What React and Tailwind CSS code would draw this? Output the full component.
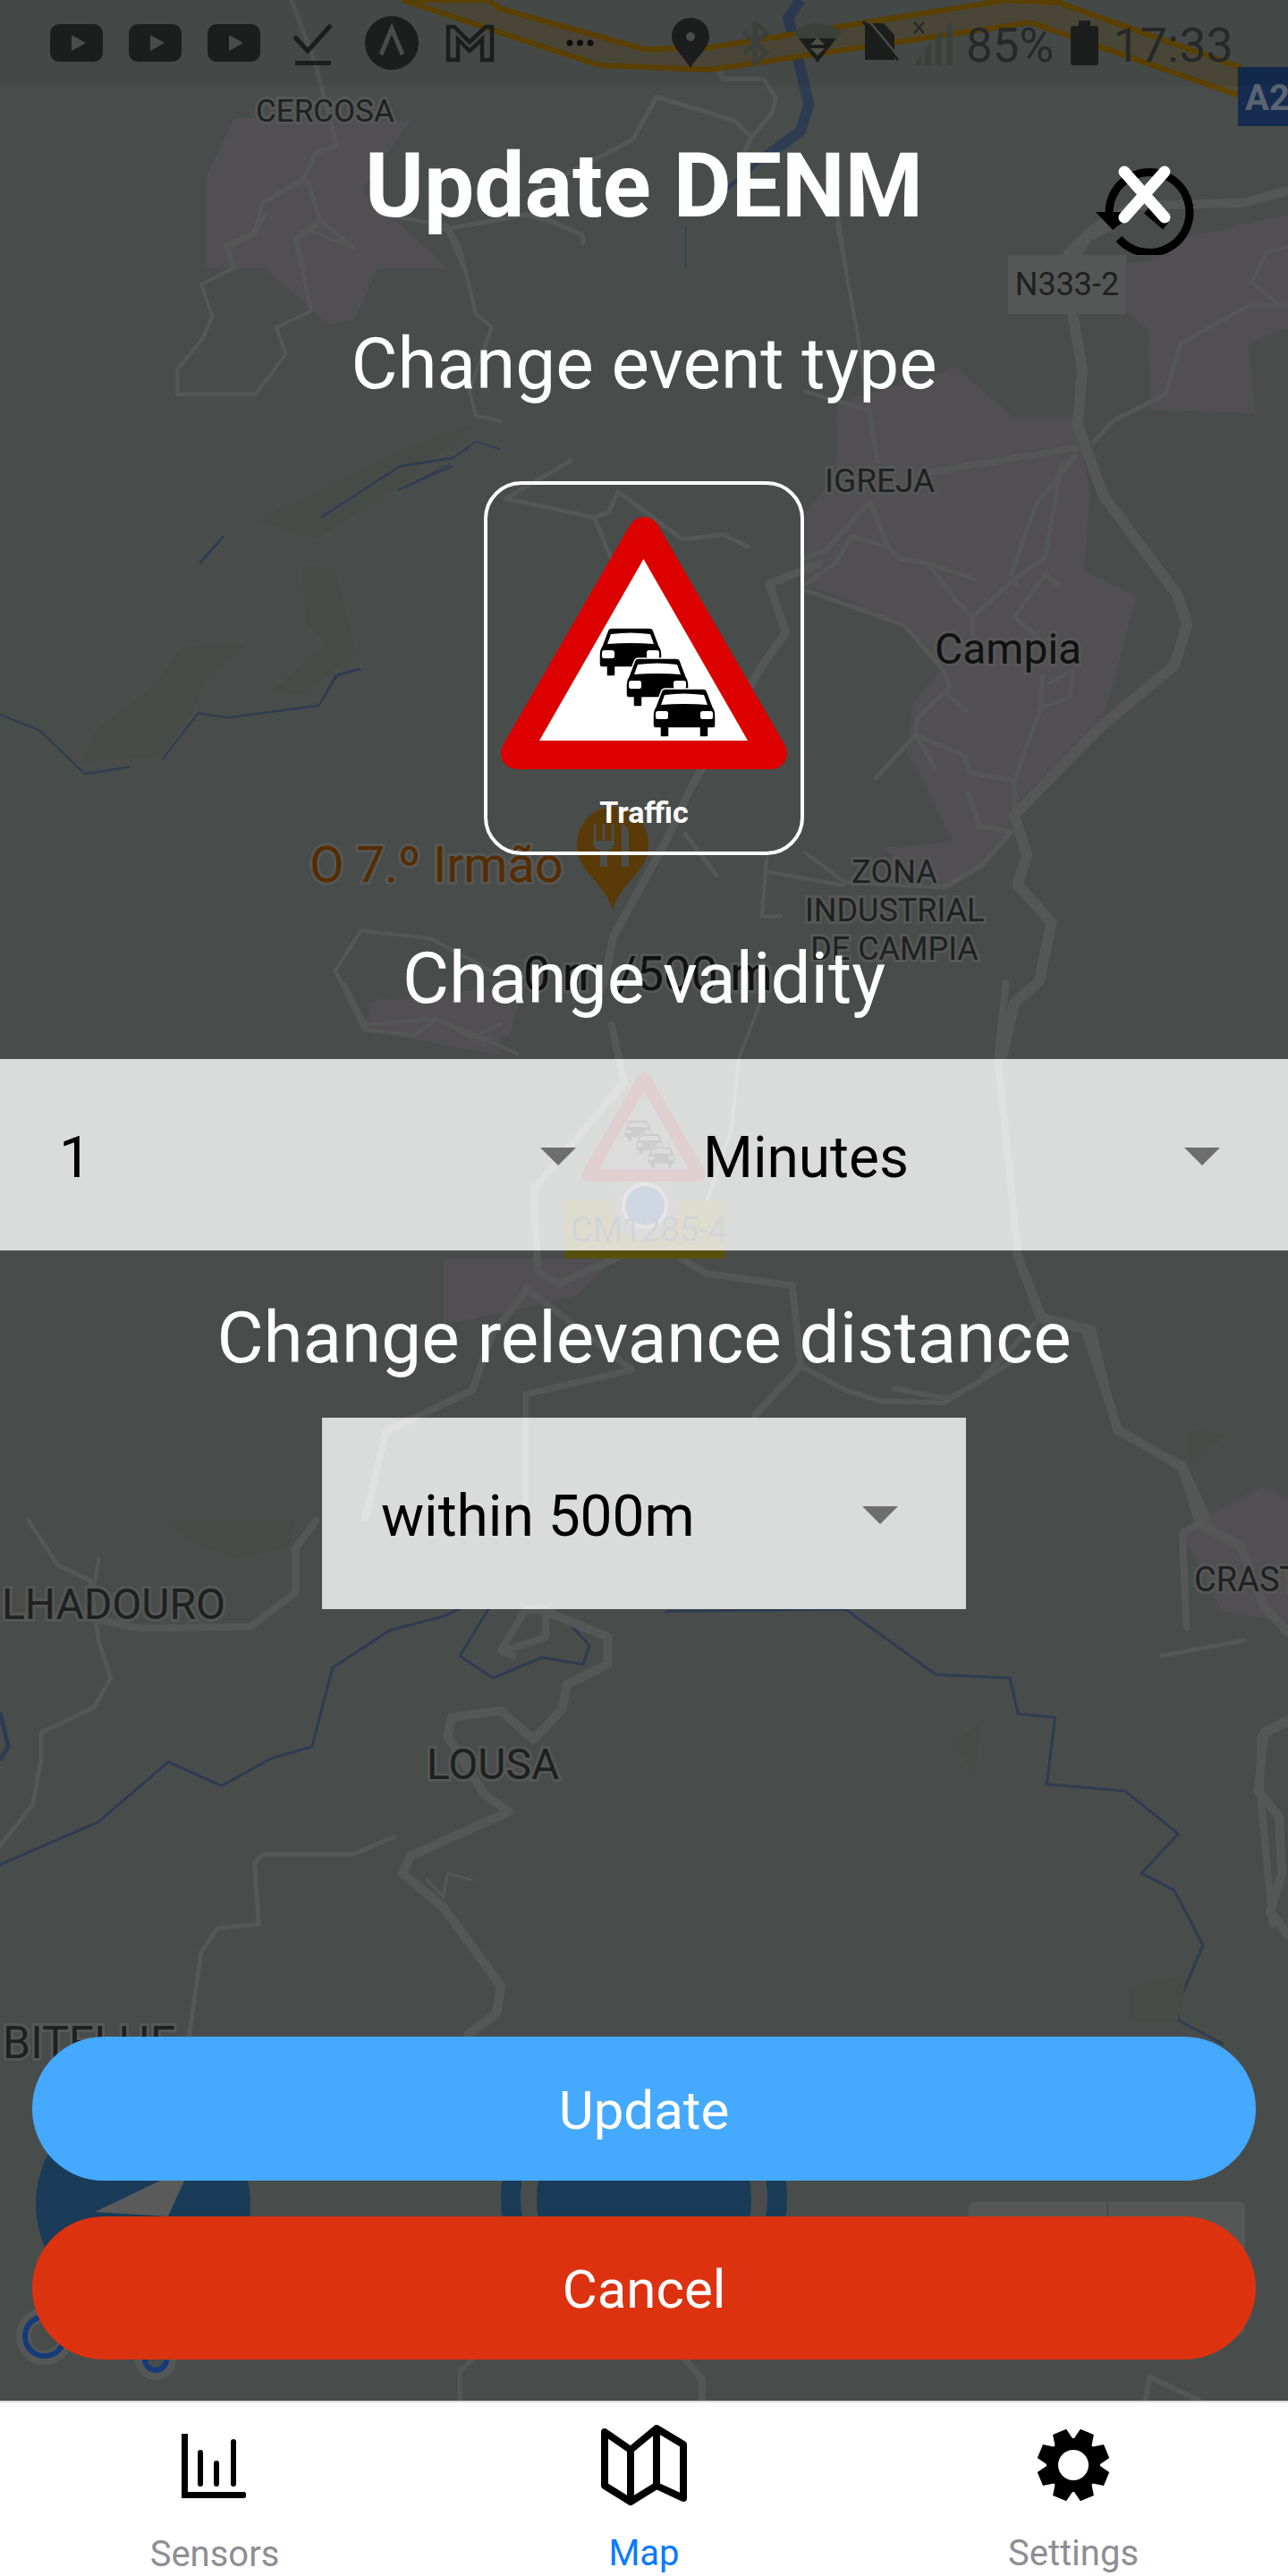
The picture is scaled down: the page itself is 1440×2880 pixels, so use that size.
import { useId } from "react";

// map shapes traced off the reference crops, each group keeps the crop's own scale
const MAP_GROUPS = [
  {
    transform: "translate(0 0) scale(.918 .3333)",
    areas: ["285,395 500,405 440,640 530,860 540,900 250,900 250,600", "1385,900 1450,790 1568,730 1568,900"],
    roads: [
      [5, "355,0 385,220 410,490 385,510 370,600 320,680 310,780 275,825 285,900"],
      [5, "375,610 390,740 430,830"],
      [5, "390,740 360,800 370,900"],
      [5, "875,230 880,265 930,265 945,330 940,380 915,460 905,520"],
      [5, "800,325 895,405 915,460"],
      [5, "800,325 770,470 650,640 670,740 710,790 710,815"],
      [5, "540,770 640,720 670,740"],
      [5, "545,770 565,900"],
      [5, "1020,720 1030,900"],
      [10, "1300,850 1330,770 1380,690 1515,680 1568,640"],
    ],
    rivers: [
      [12, "975,0 960,60 985,350 975,440 930,530"],
      [5, "930,530 865,680"],
      [1, "835,760 835,900"],
    ],
  },
  {
    transform: "translate(900 240) scale(.3444 .5995)",
    areas: [
      "105,350 300,320 490,285 680,380 880,380 925,520 905,665 1075,710 975,930 700,1090 650,1160 560,1220 440,1260 250,1180 480,1170 330,1000 350,910 440,850 330,770 100,710 0,690 0,560 100,480",
      "1040,90 1290,80 1400,20 1568,0 1568,210 1440,240 1460,370 1120,365 1115,215 1040,180",
    ],
    roads: [
      [12, "990,20 920,40 870,80 870,190 900,290 885,390 915,440 970,525 1210,710 1240,765 1200,840 950,960 680,1120 720,1195 690,1250 800,1320 760,1430 680,1470 640,1568"],
      [7, "410,480 880,435"],
      [5, "935,425 1000,385 1170,335 1220,240 1440,170 1568,170"],
      [4, "1450,125 1500,70 1568,60"],
      [4, "1450,125 1540,170"],
      [6, "0,640 70,625 210,535 270,620"],
      [5, "0,690 100,650 150,600 270,620 300,640 400,650 550,680"],
      [5, "400,650 490,720 545,750 700,670 780,640 830,470 880,450 750,540 670,670 690,690"],
      [5, "545,750 545,790"],
      [5, "780,670 680,750 760,790"],
      [5, "780,670 820,690"],
      [5, "0,700 320,765 450,850 470,880 365,940 360,970 230,1050"],
      [5, "460,895 525,925"],
      [5, "360,970 520,1010 530,1040 680,1055 680,1110"],
      [5, "360,970 420,1030"],
      [5, "770,860 765,920 680,1055"],
      [4, "765,920 860,900 870,850 790,875"],
      [6, "530,1080 565,1140 670,1150 570,1215 450,1255"],
      [4, "0,1190 130,1245 440,1255"],
      [4, "105,20 170,220 230,450"],
      [4, "0,330 210,365 235,460"],
    ],
  },
  {
    transform: "translate(0 240) scale(.357 .5995)",
    areas: ["650,0 1180,0 1195,85 1110,195 1030,205 770,70", "1180,1460 1568,1490 1568,1568 1130,1520"],
    greens: [
      "260,1020 300,960 480,880 570,805 770,800 640,870 600,930 500,1010",
      "945,655 1050,660 1115,815 950,895 850,890 1020,800 960,760",
      "810,570 1250,440 1490,390 1240,510 990,605",
    ],
    roads: [
      [4, "830,0 800,35 715,60 730,100 630,130 665,190 635,230 555,290 555,335 800,335 895,260 865,210 975,180 925,50 1000,15"],
      [4, "975,30 1100,60"],
      [4, "1190,0 1400,20 1440,60 1490,185 1540,210 1470,330 1490,375 1568,385"],
      [4, "1050,1410 1130,1335 1350,1350 1568,1420"],
      [4, "1050,1410 1140,1520 1300,1530 1370,1500 1480,1535 1568,1510"],
    ],
    rivers: [
      [2, "0,932 125,962 265,1043 405,1030"],
      [2, "510,1015 620,930 715,938 1000,915 1050,860 1130,848"],
      [3, "625,650 700,600"],
      [1.5, "1010,563 1250,470 1415,455 1490,423 1568,438"],
      [1.5, "1245,515 1410,465"],
    ],
  },
  {
    transform: "translate(300 500) scale(.5357 .3827)",
    roads: [
      [5, "630,40 495,150 680,205 710,190 730,130 865,270 950,255 1000,290"],
      [5, "680,205 720,340"],
      [9, "1150,340 1045,400 1080,540 1030,640 970,780 880,1000 830,1150 720,1430 700,1568"],
      [5, "870,1130 935,1250"],
      [4, "1040,1200 1030,1370 1070,1370"],
      [4, "1040,1240 1200,1280"],
    ],
    rivers: [
      [2, "110,205 275,55 385,30 420,0"],
      [2, "270,125 385,55"],
      [2, "0,775 105,755 145,665 190,645"],
    ],
  },
  {
    transform: "translate(0 1100) scale(.918 .459)",
    areas: ["450,45 640,0 620,130 530,85 450,100", "540,670 750,670 700,760 640,790 540,830"],
    roads: [
      [4, "420,0 445,100 530,85 580,125 630,170"],
      [4, "580,125 590,150"],
      [8, "745,100 760,240 650,500 655,700 680,730 760,660"],
      [8, "830,670 860,705 965,735 975,930 920,1050"],
      [8, "640,750 600,850 575,990 470,1090 445,1300"],
      [7, "640,740 770,940 640,1000 640,1300"],
      [8, "1225,0 1215,180 1240,660 1270,810 1330,840 1360,1090 1440,1170 1470,1300 1440,1340 1445,1568"],
      [4, "935,0 900,180 890,360 840,650"],
      [6, "975,930 1030,990 1070,1015 1150,1020 1200,960 1240,910"],
    ],
  },
  {
    transform: "translate(0 1700) scale(.918 .3827)",
    greens: ["205,0 360,0 350,80 290,110 230,60"],
    roads: [
      [5, "35,0 70,130 110,175 120,350 135,460 115,545 50,620 50,700 40,830 0,950"],
      [8, "385,0 360,80 360,210 305,310 170,315 100,280"],
      [10, "660,260 740,340 740,420 690,480 685,550 650,640 610,555 550,575 545,630 590,800 620,850 500,980 490,1030 540,1130 610,1360 605,1440 570,1500"],
      [5, "480,925 430,975 320,975 310,1000 315,1180 265,1190 245,1260 230,1510"],
      [3, "575,1050 545,1030 540,1100 520,1050"],
      [8, "615,380 665,340 665,260 640,260 610,380 625,395"],
      [5, "1415,395 1515,350"],
      [8, "1568,590 1535,630 1535,800 1550,1180"],
      [4, "120,110 115,190"],
    ],
    rivers: [
      [5, "0,560 10,660 0,700"],
      [3, "0,1005 120,880 205,705 270,775 330,695 380,660 405,430 475,320 540,280 560,258"],
      [3, "595,258 560,395 600,460 660,400 710,420 718,365 680,265"],
      [3, "810,265 1030,260 1140,450 1230,460 1240,565 1285,575 1275,770 1370,790 1435,915 1390,1030 1430,1080 1465,1240 1435,1410 1435,1460 1490,1530"],
    ],
  },
  {
    transform: "translate(1000 1400) scale(.3333 .574)",
    areas: ["960,540 1240,455 1320,480 1320,720 1100,700"],
    greens: ["990,345 1120,355 990,405", "200,955 290,915 270,1020", "790,1430 980,1410 950,1500 790,1500"],
    roads: [
      [10, "410,0 490,130 640,150 750,345 965,420 1025,530 1160,570 1240,690 1320,740"],
      [6, "0,265 80,275 180,285 280,255 470,140"],
      [10, "1320,910 1240,935 1220,1050 1290,1100 1300,1210 1260,1285 1320,1330"],
    ],
  },
  {
    transform: "translate(0 2200) scale(.918 .4337)",
    roads: [
      [5, "560,1115 560,1040 575,1010"],
      [8, "835,1010 855,1060 855,1115"],
      [6, "1395,1115 1400,1055 1460,1115"],
    ],
  },
];

const CAR_BODY =
  "M14,0 H56 Q60,0 61,4 L67,20 Q70,24 70,30 V42 Q70,44 67,44 H62 V52 Q62,54 60,54 H53 Q52,54 52,52 V44 H18 V52 Q18,54 16,54 H9 Q8,54 8,52 V44 H3 Q0,44 0,40 V30 Q0,24 3,20 L9,4 Q10,0 14,0 Z";

const Car = ({ x, y, body, glass }) => (
  <g transform={`translate(${x} ${y})`}>
    <path d={CAR_BODY} fill={body} stroke={glass} strokeWidth="1.5" />
    <path d="M13,7 Q35,4 57,7 L61,18 Q35,16 9,18 Z" fill={glass} />
    <rect x="3" y="25" width="14" height="9" rx="2.5" fill={glass} />
    <rect x="53" y="25" width="14" height="9" rx="2.5" fill={glass} />
  </g>
);

const TrafficSign = ({ red = "#dd0000", white = "#ffffff", car = "#000000", className }) => (
  <svg viewBox="0 0 320 282" className={className}>
    <polygon points="160,18 18,264 302,264" fill={red} stroke={red} strokeWidth="36" strokeLinejoin="round" />
    <polygon points="159.5,47 43,250 276,250" fill={white} />
    <Car x={110} y={124} body={car} glass={white} />
    <Car x={140} y={158} body={car} glass={white} />
    <Car x={170} y={192} body={car} glass={white} />
  </svg>
);

const RoadLines = ({ color }) =>
  MAP_GROUPS.map((group) => (
    <g key={group.transform} transform={group.transform} fill="none">
      {(group.roads || []).map(([width, points]) => (
        <polyline key={points} points={points} stroke={color} strokeWidth={width} vectorEffect="non-scaling-stroke" strokeLinejoin="round" strokeLinecap="round" />
      ))}
    </g>
  ));

const MapLayer = () => {
  const clipId = useId();
  return (
    <svg viewBox="0 0 1440 2684" className="absolute inset-0 w-full h-full">
      <defs>
        <clipPath id={clipId}>
          <rect x="0" y="1184" width="1440" height="214" />
          <rect x="360" y="1585" width="720" height="214" />
        </clipPath>
      </defs>
      {MAP_GROUPS.map((group) => (
        <g key={group.transform} transform={group.transform} fill="none">
          {(group.areas || []).map((points) => (
            <polygon key={points} points={points} fill="#514f52" />
          ))}
          {(group.greens || []).map((points) => (
            <polygon key={points} points={points} fill="#464b47" />
          ))}
          {(group.rivers || []).map(([width, points]) => (
            <polyline key={points} points={points} stroke="#2e3c52" strokeWidth={width} vectorEffect="non-scaling-stroke" strokeLinejoin="round" />
          ))}
        </g>
      ))}
      <RoadLines color="#555756" />
      {/* roads read a little brighter through the selects */}
      <g clipPath={`url(#${clipId})`}>
        <RoadLines color="#696b6a" />
      </g>

      {/* motorway across the top */}
      <polygon
        points="546,0 560,10 721,55 794,53 1125,0 1184,3 1386,75 1386,107 1152,25 794,78 670,73 450,0"
        fill="#4f4a3a"
        stroke="#5f4400"
        strokeWidth="6"
      />

      {/* restaurant pin */}
      <path d="M685,902 C707,902 725,920 725,945 C725,975 695,985 685,1017 C675,985 645,975 645,945 C645,920 663,902 685,902 Z" fill="#5a3a08" />
      <path d="M665,921 V942 M675,921 V942 M685,921 V942" stroke="#4b4f4c" strokeWidth="3" fill="none" />
      <path d="M663.5,940 H686.5 V944 Q686,950 679,951 V969 H671 V951 Q664,950 663.5,944 Z" fill="#4b4f4c" />
      <path d="M695,921 Q703,923 703,935 V969 H695 Z" fill="#4b4f4c" />

      {/* current position and the event sign, they show through the select */}
      <rect x="631" y="1342" width="180" height="65" fill="#57500f" />
      <circle cx="721" cy="1348" r="38" fill="#4f5254" />
      <circle cx="721" cy="1348" r="26" fill="#828282" />
      <circle cx="721" cy="1348" r="22" fill="#0f376e" />

      {/* map controls peeking out between the buttons */}
      <circle cx="160" cy="2464" r="120" fill="#1a3b57" />
      <polygon points="106,2473 179,2438 206,2438 188,2478" fill="#5a5a5a" />
      <circle cx="720" cy="2458" r="149" fill="none" stroke="#1a3b57" strokeWidth="22" />
      <circle cx="720" cy="2458" r="120" fill="#1a3b57" />
      <rect x="1083" y="2461" width="309" height="150" rx="8" fill="#555756" />
      <line x1="1238" y1="2461" x2="1238" y2="2611" stroke="#484d4b" strokeWidth="2" />
      <circle cx="50" cy="2612" r="24" fill="none" stroke="#555756" strokeWidth="16" />
      <circle cx="50" cy="2612" r="22" fill="none" stroke="#173a78" strokeWidth="6" />
      <circle cx="174" cy="2638" r="16" fill="none" stroke="#555756" strokeWidth="14" />
      <circle cx="174" cy="2638" r="12" fill="none" stroke="#173a78" strokeWidth="6" />
    </svg>
  );
};

const HALO = "[-webkit-text-stroke:6px_#555756] [paint-order:stroke_fill]";

const MapLabels = () => (
  <>
    <div className={`absolute left-[286px] top-[99px] text-[35px] text-[#1e2120] ${HALO}`}>CERCOSA</div>
    <div className="absolute left-[1384px] top-[75px] w-[56px] h-[66px] bg-[#152c50] overflow-hidden">
      <span className="block ml-[8px] mt-[11px] text-[40px] leading-[47px] font-bold text-[#5a6470]">A2</span>
    </div>
    <div className="absolute left-[1127px] top-[285px] w-[132px] h-[66px] bg-[#555756] flex items-center justify-center text-[36px] text-[#1e2120]">N333-2</div>
    <div className={`absolute left-[922px] top-[510px] text-[37px] text-[#1e2120] ${HALO}`}>IGREJA</div>
    <div className={`absolute left-[1045px] top-[690px] text-[48px] text-[#111111] ${HALO}`}>Campia</div>
    <div className={`absolute left-[900px] w-[200px] top-[954px] text-center text-[36px] leading-[43px] text-[#1e2120] ${HALO}`}>
      ZONA INDUSTRIAL DE CAMPIA
    </div>
    <div className={`absolute left-[346px] top-[925px] text-[56px] text-[#562c02] ${HALO}`}>O 7.º Irmão</div>
    <div className={`absolute left-[585px] top-[1048px] text-[54px] text-[#111111] ${HALO}`}>0 m /500 m</div>
    <TrafficSign red="#640f0f" white="#505050" className="absolute left-[651px] top-[1199px] w-[138px] h-[122px]" />
    <div className="absolute left-[638px] top-[1347px] text-[38px] text-[#1f2838]">CM1285-4</div>
    <div className={`absolute left-[2px] top-[1758px] text-[48px] text-[#1e2120] ${HALO}`}>LHADOURO</div>
    <div className={`absolute left-[1335px] top-[1738px] text-[38px] text-[#1e2120] ${HALO}`}>CRAST</div>
    <div className={`absolute left-[477px] top-[1937px] text-[48px] text-[#1e2120] ${HALO}`}>LOUSA</div>
    <div className={`absolute left-[3px] top-[2247px] text-[50px] text-[#1e2120] ${HALO}`}>BITELHE</div>
  </>
);

const YoutubeIcon = () => (
  <svg width="59" height="42" viewBox="0 0 59 42">
    <rect width="59" height="42" rx="10" fill="#1b1e1d" />
    <polygon points="24,12 40,21 24,30" fill="#484d4b" />
  </svg>
);

const StatusBar = () => (
  <div className="relative h-[96px] shrink-0 bg-black/5 flex items-center pl-[56px] text-[#262928]">
    <YoutubeIcon />
    <span className="ml-[29px] flex"><YoutubeIcon /></span>
    <span className="ml-[29px] flex"><YoutubeIcon /></span>
    <svg width="44" height="46" viewBox="0 0 44 46" className="ml-[37px] mt-[4px]">
      <path d="M1,14 L16,30 L42,1" stroke="#1b1e1d" strokeWidth="5" fill="none" />
      <rect x="2" y="41" width="40" height="5" fill="#1b1e1d" />
    </svg>
    <svg width="60" height="60" viewBox="0 0 60 60" className="ml-[36px]">
      <circle cx="30" cy="30" r="30" fill="#1b1e1d" />
      <path d="M18,43 L30,14 L42,43" stroke="#484d4b" strokeWidth="5" fill="none" />
    </svg>
    <svg width="55" height="43" viewBox="0 0 55 43" className="ml-[30px]">
      <path d="M3,40 V3 H10 L27,20 L45,3 H52 V40 H41 V17 L27,30 L14,17 V40 Z" stroke="#1b1e1d" strokeWidth="4.5" fill="none" />
    </svg>
    <svg width="31" height="8" viewBox="0 0 31 8" className="ml-[80px]">
      <circle cx="4" cy="4" r="3.5" fill="#0d0f0e" />
      <circle cx="15.5" cy="4" r="3.5" fill="#0d0f0e" />
      <circle cx="27" cy="4" r="3.5" fill="#0d0f0e" />
    </svg>
    <svg width="42" height="56" viewBox="0 0 42 56" className="ml-[87px]">
      <path d="M21,0 C33,0 42,9 42,21 C42,33 28,44 21,56 C14,44 0,33 0,21 C0,9 9,0 21,0 Z" fill="#1b1e1d" />
      <circle cx="21" cy="21" r="5" fill="#484d4b" />
    </svg>
    <svg width="30" height="50" viewBox="0 0 30 50" className="ml-[37px]">
      <path d="M1,13 L27,36 L14,48 V2 L27,14 L1,37" stroke="#3b403d" strokeWidth="5" fill="none" />
    </svg>
    <svg width="54" height="44" viewBox="0 0 54 44" className="ml-[27px]">
      <path d="M0,10 Q27,-10 54,10 L48,17 L6,17 Z" fill="#3b403d" />
      <path d="M6,17 H48 L27,44 Z" fill="#1b1e1d" />
      <path d="M27,16 L19,24 H35 Z M19,28 H35 L27,36 Z" fill="#4f4f45" />
    </svg>
    <svg width="44" height="50" viewBox="0 0 44 50" className="ml-[23px]">
      <path d="M3,3 H24 L36,16 V44 H3 Z" fill="#1b1e1d" />
      <line x1="1" y1="1" x2="40" y2="44" stroke="#1b1e1d" strokeWidth="3" />
      <line x1="8" y1="1" x2="42" y2="42" stroke="#4a4b42" strokeWidth="2.5" />
    </svg>
    <svg width="50" height="50" viewBox="0 0 50 50" className="ml-[13px]">
      <path d="M1,1 L12,13 M12,1 L1,13" stroke="#262928" strokeWidth="2.5" transform="translate(0 1)" />
      <polygon points="0,50 9,38 9,50" fill="#3b403d" />
      <polygon points="13,50 13,33 20,24 20,50" fill="#3b403d" />
      <polygon points="25,50 25,18 32,11 32,50" fill="#3b403d" />
      <polygon points="37,50 37,6 44,0 44,50" fill="#3b403d" />
    </svg>
    <span className="ml-[9px] pt-[6px] text-[53px] leading-none">85%</span>
    <svg width="31" height="50" viewBox="0 0 31 50" className="ml-[19px]">
      <rect x="9" y="0" width="13" height="7" fill="#1b1e1d" />
      <rect x="0" y="6" width="31" height="44" rx="3" fill="#1b1e1d" />
    </svg>
    <span className="ml-[16px] pt-[6px] text-[54px] leading-none">17:33</span>
  </div>
);

const CloseButton = () => (
  <svg viewBox="0 0 120 100" className="absolute left-[1220px] top-[185px] w-[120px] h-[100px]">
    <path d="M20,52 A45,45 0 1 1 31,82" stroke="#000000" strokeWidth="9" fill="none" />
    <polygon points="5,52 50,52 24,72" fill="#000000" />
    <path d="M62,50 L83,68" stroke="#000000" strokeWidth="9" />
    <path d="M37,7 L82,58 M82,7 L37,58" stroke="#ffffff" strokeWidth="13" strokeLinecap="round" />
  </svg>
);

const Select = ({ value, className = "" }) => (
  <div className={`h-[214px] bg-white/80 flex items-center justify-between pl-[66px] pr-[76px] ${className}`}>
    <span className="text-[64px] text-black pt-[7px]">{value}</span>
    <svg width="40" height="20" viewBox="0 0 40 20" className="mt-[4px]">
      <polygon points="0,0 40,0 20,20" fill="#6e6e6e" />
    </svg>
  </div>
);

const GEAR_PATH = (() => {
  let d = "";
  for (let i = 0; i < 8; i++) {
    const a = ((i * 45 + 22.5 - 90) * Math.PI) / 180;
    const pt = (r, off) => `${(41 + r * Math.cos(a + off)).toFixed(1)},${(41 + r * Math.sin(a + off)).toFixed(1)}`;
    d += `${i === 0 ? "M" : "L"}${pt(30, -0.36)} L${pt(41, -0.2)} L${pt(41, 0.2)} L${pt(30, 0.36)} `;
  }
  return `${d}Z M41,24 A17,17 0 1 0 41,58 A17,17 0 1 0 41,24 Z`;
})();

const TabBar = () => (
  <div className="h-[196px] shrink-0 bg-white border-t-2 border-[#dcdcdc] grid grid-cols-3 text-[40px] text-[#8e8e93]">
    <div className="flex flex-col items-center">
      <svg width="72" height="72" viewBox="0 0 72 72" className="mt-[35px] ml-[-2px]">
        <path d="M3.5,0 V68.5 H69" stroke="#000000" strokeWidth="7" fill="none" strokeLinecap="round" />
        <path d="M21,21 V56 M39,33 V56 M58,9 V56" stroke="#000000" strokeWidth="6" strokeLinecap="round" />
      </svg>
      <span className="mt-[39px] leading-[47px]">Sensors</span>
    </div>
    <div className="flex flex-col items-center">
      <svg width="96" height="90" viewBox="0 0 96 90" className="mt-[25px]">
        <path d="M4,8 L33,28 L62,4 L92,22 V82 L62,68 L33,86 L4,68 Z M33,28 V86 M62,4 V68" stroke="#000000" strokeWidth="8" fill="none" strokeLinejoin="round" />
      </svg>
      <span className="mt-[30px] leading-[47px] text-[#0a7aff]">Map</span>
    </div>
    <div className="flex flex-col items-center">
      <svg width="82" height="82" viewBox="0 0 82 82" className="mt-[29px]">
        <path d={GEAR_PATH} fill="#000000" fillRule="evenodd" />
      </svg>
      <span className="mt-[34px] leading-[47px]">Settings</span>
    </div>
  </div>
);

const App = () => {
  return (
    <div className="w-[1440px] h-[2880px] flex flex-col overflow-hidden bg-[#484d4b] [font-family:Roboto,sans-serif]">
      <div className="relative flex-1 flex flex-col overflow-hidden">
        <MapLayer />
        <MapLabels />
        <StatusBar />
        <CloseButton />

        <div className="relative flex-1 flex flex-col items-center text-white">
          <h1 className="mt-[53px] text-[100px] leading-[117px] font-bold">Update DENM</h1>
          <h2 className="mt-[94px] text-[80px] leading-[94px]">Change event type</h2>
          <div className="mt-[84px] w-[358px] h-[418px] border-4 border-white rounded-[42px] flex flex-col items-center pt-[36px]">
            <TrafficSign className="w-[320px] h-[282px] shrink-0" />
            <span className="mt-[29px] text-[34px] leading-[38px] font-bold">Traffic</span>
          </div>
          <h2 className="mt-[91px] text-[80px] leading-[94px]">Change validity</h2>
          <div className="mt-[43px] w-full grid grid-cols-2">
            <Select value="1" />
            <Select value="Minutes" />
          </div>
          <h2 className="mt-[51px] text-[80px] leading-[94px]">Change relevance distance</h2>
          <Select value="within 500m" className="mt-[42px] w-[720px]" />

          <div className="mt-auto mb-[46px] w-full px-[36px] flex flex-col gap-[40px]">
            <button className="h-[161px] pt-[4px] rounded-[80px] bg-[#44a9ff] text-[60px] text-white">Update</button>
            <button className="h-[160px] pt-[4px] rounded-[80px] bg-[#dd3210] text-[60px] text-white">Cancel</button>
          </div>
        </div>
      </div>
      <TabBar />
    </div>
  );
};

export default App;
